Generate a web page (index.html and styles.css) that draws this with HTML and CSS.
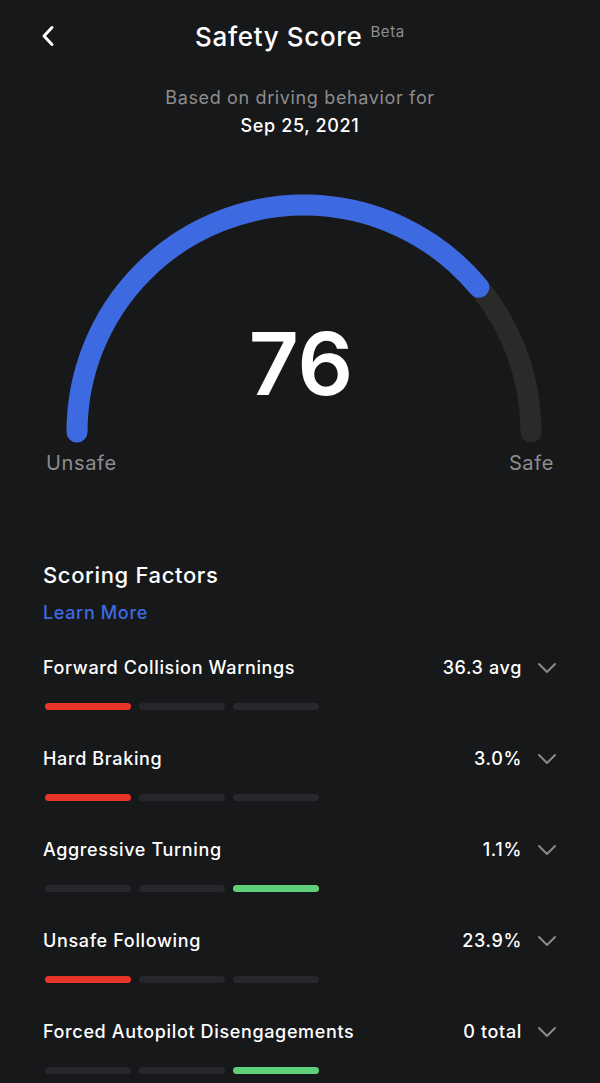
FILE: index.html
```html
<!DOCTYPE html>
<html lang="en">
<head>
<meta charset="utf-8">
<title>Safety Score</title>
<link rel="stylesheet" href="styles.css">
</head>
<body>
<div class="screen">
  <header class="header">
    <button class="back" aria-label="Back">
      <svg width="14" height="22" viewBox="0 0 14 22"><path d="M11 2.5 L3 11 L11 19.5" fill="none" stroke="#fff" stroke-width="3" stroke-linecap="round" stroke-linejoin="round"/></svg>
    </button>
    <h1 class="title">Safety Score<sup class="beta">Beta</sup></h1>
  </header>

  <div class="based">
    <div class="based-label">Based on driving behavior for</div>
    <div class="based-date">Sep 25, 2021</div>
  </div>

  <div class="gauge">
    <svg class="gauge-svg" width="600" height="263" viewBox="0 0 600 263">
      <path d="M77 252 A227 227 0 0 1 531 252" fill="none" stroke="#2a2a2b" stroke-width="21" stroke-linecap="round"/>
      <path d="M77 252 A227 227 0 0 1 531 252" fill="none" stroke="#3e6ae1" stroke-width="21" stroke-linecap="round" pathLength="100" stroke-dasharray="78 200"/>
      <text class="score" x="301" y="215" text-anchor="middle">76</text>
    </svg>
    <div class="gauge-labels">
      <span>Unsafe</span>
      <span>Safe</span>
    </div>
  </div>

  <section class="factors">
    <h2 class="factors-title">Scoring Factors</h2>
    <a class="learn" href="#">Learn More</a>

    <div class="factor">
      <div class="factor-head">
        <span class="factor-name">Forward Collision Warnings</span>
        <span class="factor-value">36.3 avg</span>
        <svg class="chev" width="20" height="12" viewBox="0 0 20 12"><path d="M2 2 L10 10 L18 2" fill="none" stroke="#8a8a8c" stroke-width="2" stroke-linecap="round" stroke-linejoin="round"/></svg>
      </div>
      <div class="bars"><span class="bar red"></span><span class="bar"></span><span class="bar"></span></div>
    </div>

    <div class="factor">
      <div class="factor-head">
        <span class="factor-name">Hard Braking</span>
        <span class="factor-value">3.0%</span>
        <svg class="chev" width="20" height="12" viewBox="0 0 20 12"><path d="M2 2 L10 10 L18 2" fill="none" stroke="#8a8a8c" stroke-width="2" stroke-linecap="round" stroke-linejoin="round"/></svg>
      </div>
      <div class="bars"><span class="bar red"></span><span class="bar"></span><span class="bar"></span></div>
    </div>

    <div class="factor">
      <div class="factor-head">
        <span class="factor-name">Aggressive Turning</span>
        <span class="factor-value">1.1%</span>
        <svg class="chev" width="20" height="12" viewBox="0 0 20 12"><path d="M2 2 L10 10 L18 2" fill="none" stroke="#8a8a8c" stroke-width="2" stroke-linecap="round" stroke-linejoin="round"/></svg>
      </div>
      <div class="bars"><span class="bar"></span><span class="bar"></span><span class="bar green"></span></div>
    </div>

    <div class="factor">
      <div class="factor-head">
        <span class="factor-name">Unsafe Following</span>
        <span class="factor-value">23.9%</span>
        <svg class="chev" width="20" height="12" viewBox="0 0 20 12"><path d="M2 2 L10 10 L18 2" fill="none" stroke="#8a8a8c" stroke-width="2" stroke-linecap="round" stroke-linejoin="round"/></svg>
      </div>
      <div class="bars"><span class="bar red"></span><span class="bar"></span><span class="bar"></span></div>
    </div>

    <div class="factor">
      <div class="factor-head">
        <span class="factor-name">Forced Autopilot Disengagements</span>
        <span class="factor-value">0 total</span>
        <svg class="chev" width="20" height="12" viewBox="0 0 20 12"><path d="M2 2 L10 10 L18 2" fill="none" stroke="#8a8a8c" stroke-width="2" stroke-linecap="round" stroke-linejoin="round"/></svg>
      </div>
      <div class="bars"><span class="bar"></span><span class="bar"></span><span class="bar green"></span></div>
    </div>
  </section>
</div>
</body>
</html>
```

FILE: styles.css
```css
html, body {
  margin: 0;
  padding: 0;
  background: #17181a;
}
body {
  font-family: Inter, "Noto Sans", "Liberation Sans", sans-serif;
  color: #ffffff;
  letter-spacing: 0.04em;
  -webkit-font-smoothing: antialiased;
}
.screen {
  width: 600px;
  height: 1083px;
  overflow: hidden;
}
.header {
  position: relative;
  padding-top: 21px;
  height: 32px;
  display: flex;
  justify-content: center;
}
.back {
  position: absolute;
  left: 41px;
  top: 25px;
  padding: 0;
  margin: 0;
  border: 0;
  background: none;
  line-height: 0;
}
.title {
  margin: 0;
  font-size: 26px;
  line-height: 32px;
  font-weight: 500;
}
.beta {
  font-size: 15px;
  font-weight: 400;
  color: #8e8e90;
  margin-left: 8px;
  vertical-align: 0;
  position: relative;
  top: -9px;
}
.based {
  margin-top: 31px;
  text-align: center;
}
.based-label {
  font-size: 18px;
  line-height: 28px;
  color: #8d8d8f;
}
.based-date {
  font-size: 18px;
  line-height: 28px;
  font-weight: 500;
  color: #fff;
}
.gauge {
  margin-top: 40px;
}
.gauge-svg {
  display: block;
}
.score {
  font-family: Inter, "Noto Sans", sans-serif;
  font-size: 87px;
  font-weight: 600;
  letter-spacing: 0;
  fill: #ffffff;
}
.gauge-labels {
  display: flex;
  justify-content: space-between;
  padding: 0 46px 0 46px;
  margin-top: 8px;
  font-size: 20px;
  line-height: 24px;
  color: #8d8d8f;
}
.factors {
  margin-top: 86px;
  padding: 0 44px 0 43px;
}
.factors-title {
  margin: 0;
  font-size: 22px;
  line-height: 28px;
  font-weight: 500;
}
.learn {
  display: block;
  margin-top: 12px;
  font-size: 18px;
  line-height: 24px;
  font-weight: 500;
  color: #3e6ae1;
  text-decoration: none;
}
.factor {
  margin-top: 31px;
  height: 60px;
}
.factor-head {
  display: flex;
  align-items: center;
  height: 24px;
  font-size: 18px;
  line-height: 24px;
  font-weight: 500;
}
.factor-name {
  flex: 1;
}
.factor-value {
  margin-right: 15px;
}
.chev {
  display: block;
  margin-right: -1px;
}
.bars {
  display: flex;
  gap: 8px;
  margin-top: 23px;
  padding-left: 2px;
}
.bar {
  display: block;
  width: 86px;
  height: 7px;
  border-radius: 4px;
  background: #26272a;
}
.bar.red {
  background: #e8352a;
}
.bar.green {
  background: #5fcf7a;
}
```
